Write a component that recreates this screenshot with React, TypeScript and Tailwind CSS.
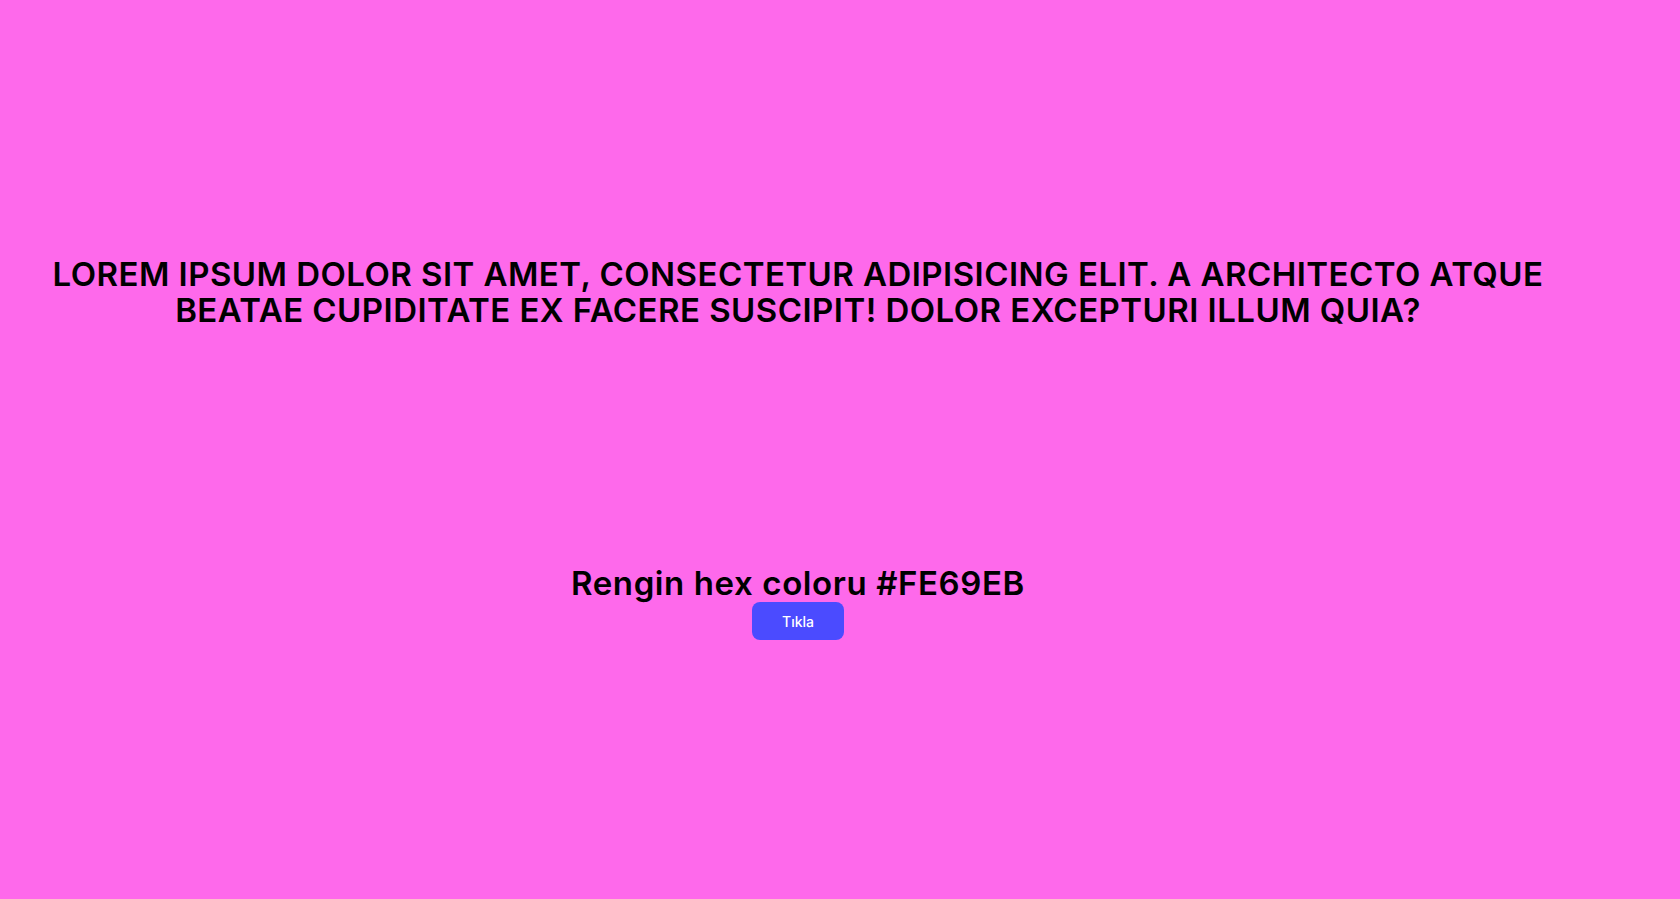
export default function App() {
  return (
    <div className="min-h-[899px] w-full bg-[#FE69EB] text-black" style={{ fontFamily: '"Inter", "Noto Sans", sans-serif' }}>
      <div className="w-[1596px] flex flex-col items-center text-center">
        <h1 className="mt-[257px] w-[1520px] text-[33px] leading-[35.7px] font-semibold uppercase tracking-[0.45px]">
          Lorem ipsum dolor sit amet, consectetur adipisicing elit. A architecto atque beatae cupiditate ex facere suscipit! Dolor excepturi illum quia?
        </h1>
        <h2 className="mt-[238px] text-[33px] leading-[35.7px] font-semibold tracking-[0.6px]">Rengin hex coloru #FE69EB</h2>
        <button className="mt-0 w-[92px] h-[38px] rounded-[8px] bg-[#4B4BFF] text-white text-[14px] font-medium">Tıkla</button>
      </div>
    </div>
  );
}
